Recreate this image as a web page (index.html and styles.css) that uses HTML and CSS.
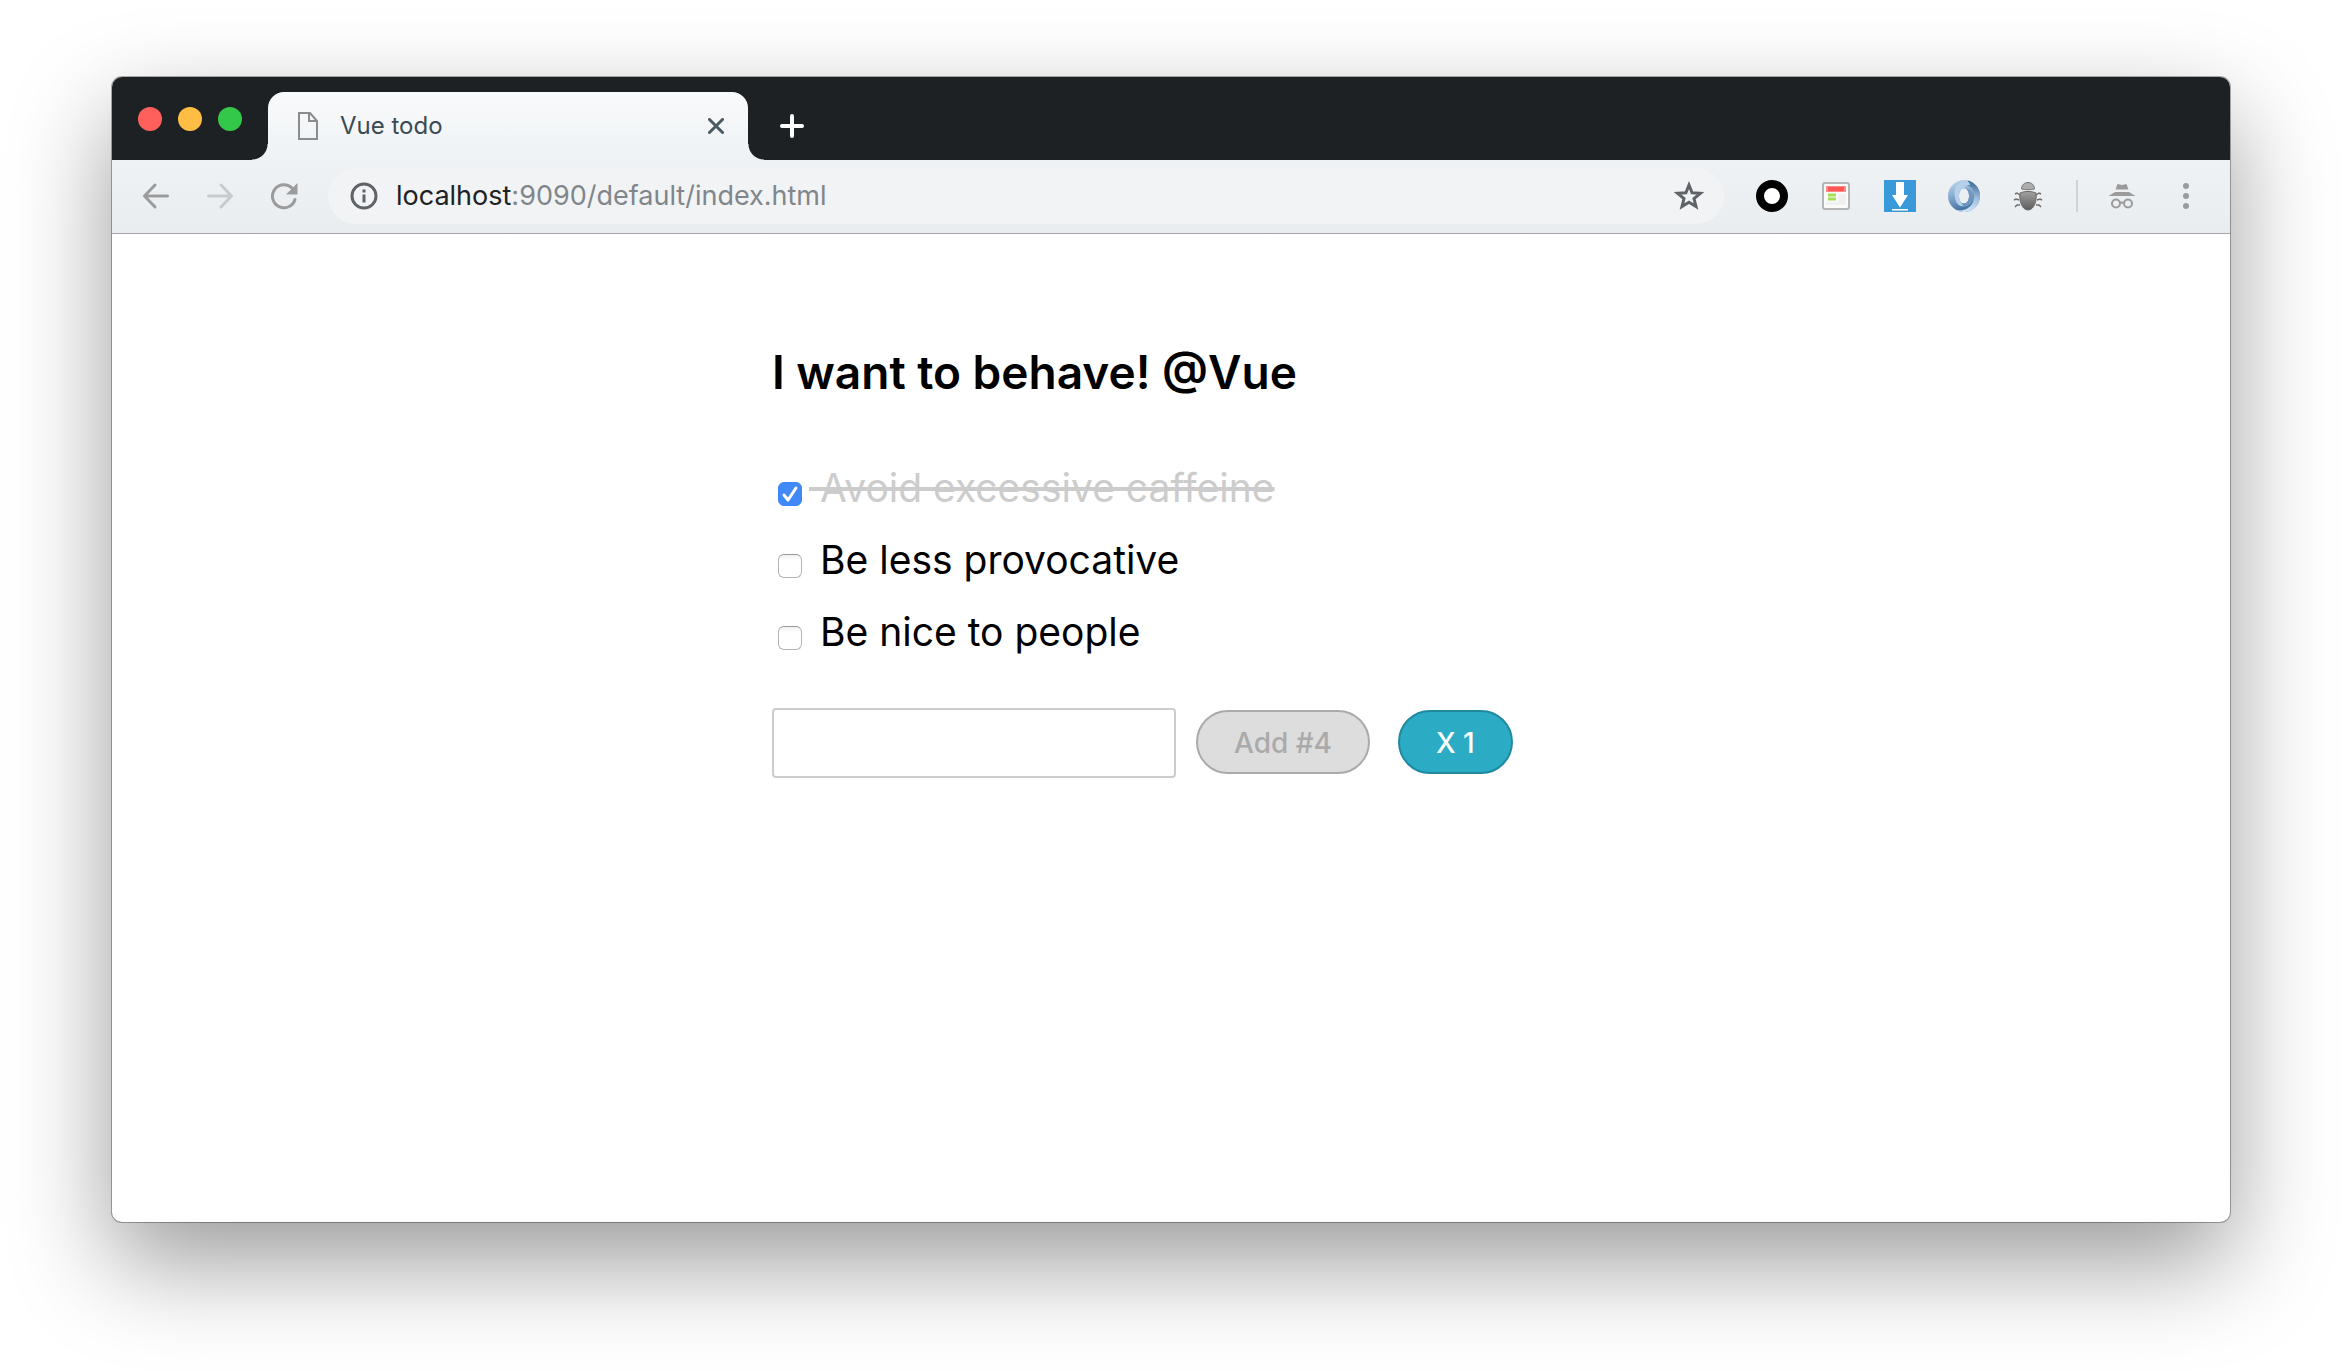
FILE: index.html
```html
<!DOCTYPE html>
<html lang="en">
<head>
<meta charset="utf-8">
<title>Vue todo</title>
<link rel="stylesheet" href="styles.css">
</head>
<body>
<div class="window">
  <header class="chrome">
    <div class="tabstrip">
      <div class="lights">
        <button class="light red" aria-label="Close window"></button>
        <button class="light yellow" aria-label="Minimize window"></button>
        <button class="light green" aria-label="Zoom window"></button>
      </div>
      <div class="tab">
        <svg class="page-icon" width="20" height="28" viewBox="0 0 20 28" fill="none" stroke="#8c8c8c" stroke-width="2"><path d="M1 1h11l7 8v18H1z"/><path d="M11 1v8h8"/></svg>
        <span class="tab-title">Vue todo</span>
        <button class="icon-button" aria-label="Close tab"><svg width="16" height="16" viewBox="0 0 16 16" stroke="#4b5b63" stroke-width="3" stroke-linecap="round"><path d="M1.500 1.500l13 13M14.500 1.500l-13 13"/></svg></button>
      </div>
      <button class="icon-button new-tab" aria-label="New tab"><svg width="24" height="24" viewBox="0 0 24 24" stroke="#fff" stroke-width="4" stroke-linecap="round"><path d="M12 2v20M2 12h20"/></svg></button>
    </div>
    <div class="toolbar">
      <nav class="nav">
        <button class="icon-button" aria-label="Back"><svg width="32" height="32" viewBox="0 0 32 32" fill="none" stroke="#9b9b9b" stroke-width="3" stroke-linecap="round" stroke-linejoin="round"><path d="M27.500 16H4.500M15 5L4.500 16 15 27"/></svg></button>
        <button class="icon-button" aria-label="Forward"><svg width="32" height="32" viewBox="0 0 32 32" fill="none" stroke="#c8cbcc" stroke-width="3" stroke-linecap="round" stroke-linejoin="round"><path d="M4.500 16h23M17 5l10.500 11L17 27"/></svg></button>
        <button class="icon-button" aria-label="Reload"><svg width="32" height="32" viewBox="0 0 32 32" fill="none"><path d="M27 19.500A11.500 11.500 0 1 1 24 8" stroke="#9b9b9b" stroke-width="3" stroke-linecap="round"/><path d="M29.500 3v11.500H18z" fill="#9b9b9b"/></svg></button>
      </nav>
      <div class="omnibox">
        <svg width="28" height="28" viewBox="0 0 28 28" fill="none" stroke="#5f6368" stroke-width="3"><circle cx="14" cy="14" r="12"/><path d="M14 12.500v8M14 7.500v3"/></svg>
        <span class="url">localhost<span class="path">:9090/default/index.html</span></span>
        <button class="icon-button" aria-label="Bookmark this page"><svg width="30" height="30" viewBox="0 0 30 30" fill="none" stroke="#5f6368" stroke-width="3"><path d="M15 4l3.100 7.700 8.200.6-6.300 5.300 2 8-7-4.400-7 4.400 2-8-6.300-5.300 8.200-.6z"/></svg></button>
      </div>
      <div class="extensions">
        <button class="icon-button" aria-label="Ring extension"><svg width="32" height="32" viewBox="0 0 32 32"><circle cx="16" cy="16" r="12" fill="#fff" stroke="#000" stroke-width="8"/></svg></button>
        <button class="icon-button" aria-label="Page extension"><svg width="32" height="32" viewBox="0 0 32 32"><rect x="3" y="3" width="26" height="26" rx="2" fill="#fafafa" stroke="#b5b5b5" stroke-width="2"/><path d="M18 14h8v11H6v-3h12z" fill="#f0f0f0"/><rect x="6" y="6" width="20" height="6" fill="#ff8a8a"/><rect x="8" y="7" width="16" height="4" fill="#ff5555"/><path d="M8 15h8M8 19h8" stroke="#a5df55" stroke-width="3"/></svg></button>
        <button class="icon-button" aria-label="Download extension"><svg width="32" height="32" viewBox="0 0 32 32"><path d="M0 0h32v32H0z" fill="#3a99d9"/><path d="M12 2h8v13h4l-8 12.500L8 15h4zM8 29h16v1.500H8z" fill="#fff"/></svg></button>
        <button class="icon-button" aria-label="Swirl extension"><svg width="32" height="32" viewBox="0 0 32 32"><defs><linearGradient id="swirl-a" x1="0" y1="0" x2=".3" y2="1"><stop offset="0" stop-color="#c4dcf0"/><stop offset=".5" stop-color="#86abd0"/><stop offset="1" stop-color="#3f6f9f"/></linearGradient><linearGradient id="swirl-b" x1=".3" y1="1" x2=".5" y2="0"><stop offset="0" stop-color="#d6e8f7"/><stop offset=".5" stop-color="#a3c2de"/><stop offset="1" stop-color="#3f6d99"/></linearGradient></defs><path fill-rule="evenodd" d="M16 0a16 16 0 1 0 0 32a16 16 0 1 0 0-32zM16 8.500c3 0 5 3.500 5 7.500s-2 7.500-5 7.500-5-3.500-5-7.500 2-7.500 5-7.500z" fill="url(#swirl-a)"/><path d="M20 .5C28 3 32 9 32 16c0 9-7 16-16 16-3 0-6-1-8-2 9 2 17-3 18-12C27 10 23 5 16 5c3-3 4-4 4-4.500z" fill="url(#swirl-b)"/><path d="M18 0C8 2 5 10 7 18c1 6 5 9 9 8-2-2-5-6-5-10 0-5 2-8 5-7.500 1-2 3-3.500 6-3.500 0-2-2-4-4-5z" fill="#b5d0e8"/><path d="M16 23.500c3 0 5-3 5-7.500 0-3-1-6-3-7.500 5 1 8 5 7 10-1 6-6 9-12 8 2-1 3-2 3-3z" fill="#6f97bf"/></svg></button>
        <button class="icon-button" aria-label="Bug extension"><svg width="32" height="32" viewBox="0 0 32 32"><defs><linearGradient id="bug" x1="0" y1="0" x2="0" y2="1"><stop offset="0" stop-color="#a2a2a2"/><stop offset="1" stop-color="#5c5c5c"/></linearGradient></defs><g fill="none" stroke="#6d6d6d" stroke-width="1.500"><path d="M8 15l-3-2-2 1M7 20l-3-1-2 1M8 25l-3 0-2 2M24 15l3-2 2 1M25 20l3-1 2 1M24 25l3 0 2 2"/></g><path d="M9.500 9c0-4 3-6.500 6.500-6.500s6.500 2.500 6.500 6.500c-4 1-9 1-13 0z" fill="#adadad" stroke="#767676"/><path d="M8 13c4-2 12-2 16 0 1 8-2 17-8 17S7 21 8 13z" fill="url(#bug)" stroke="#666"/></svg></button>
        <span class="divider"></span>
        <svg width="32" height="32" viewBox="0 0 32 32" fill="#9b9b9b"><path d="M11.500 4l4.500 1 4.500-1 2 5.500h-13zM9 12h14l6.500 4h-27z"/><g fill="none" stroke="#9b9b9b" stroke-width="2"><circle cx="10" cy="23.500" r="4"/><circle cx="22" cy="23.500" r="4"/><path d="M14 23q2-1 4 0"/></g></svg>
        <button class="icon-button" aria-label="Menu"><svg width="32" height="32" viewBox="0 0 32 32" fill="#9b9b9b"><circle cx="16" cy="6" r="3"/><circle cx="16" cy="16" r="3"/><circle cx="16" cy="26" r="3"/></svg></button>
      </div>
    </div>
  </header>
  <main class="todo">
    <h1>I want to behave! @Vue</h1>
    <ul class="items">
      <li><label class="done"><input type="checkbox" checked><span>&nbsp;Avoid excessive caffeine</span></label></li>
      <li><label><input type="checkbox"><span>&nbsp;Be less provocative</span></label></li>
      <li><label><input type="checkbox"><span>&nbsp;Be nice to people</span></label></li>
    </ul>
    <form class="entry">
      <input class="new-item" type="text" aria-label="New item">
      <button class="pill" type="submit" disabled>Add #4</button>
      <button class="pill clear" type="button">X 1</button>
    </form>
  </main>
</div>
</body>
</html>
```
FILE: styles.css
```css
* { box-sizing: border-box; }

body {
  margin: 0;
  min-height: 100vh;
  padding: 77px 112px 148px;
  display: flex;
  background: #fff;
  font-family: Inter, "Liberation Sans", sans-serif;
}

.window {
  flex: 1;
  min-width: 0;
  overflow: hidden;
  border-radius: 10px;
  background: #fff;
  box-shadow: 0 0 0 1px rgba(0, 0, 0, .3), 0 40px 100px rgba(0, 0, 0, .4);
}

button { padding: 0; font-family: inherit; }

.icon-button { display: flex; border: 0; background: none; }

svg { display: block; flex: none; }

/* browser chrome */
.chrome { border-bottom: 1px solid #a3a5a8; }

.tabstrip {
  display: flex;
  height: 83px;
  padding-left: 26px;
  background: #1e2124;
}

.lights { display: flex; gap: 16px; width: 130px; padding-top: 30px; }

.light { width: 24px; height: 24px; border: 0; border-radius: 50%; }
.red { background: #ff605c; }
.yellow { background: #ffbd44; }
.green { background: #34c84a; }

.tab {
  position: relative;
  display: flex;
  align-items: center;
  width: 480px;
  margin-top: 15px;
  padding: 0 24px 0 30px;
  gap: 22px;
  border-radius: 16px 16px 0 0;
  background: linear-gradient(#f9fafb, #eef2f5);
}

/* concave feet on either side of the tab */
.tab::before,
.tab::after {
  content: "";
  position: absolute;
  bottom: 0;
  width: 16px;
  height: 16px;
}
.tab::before { right: 100%; background: radial-gradient(circle at 0 0, transparent 15px, #eef2f5 16px); }
.tab::after { left: 100%; background: radial-gradient(circle at 100% 0, transparent 15px, #eef2f5 16px); }

.tab-title { flex: 1; font-size: 24px; line-height: 32px; color: #3b4a52; }

.new-tab { align-items: center; margin-left: 32px; padding-top: 15px; }

.toolbar {
  display: flex;
  align-items: center;
  height: 73px;
  padding: 0 28px 2px;
  background: linear-gradient(#eef2f5, #e9edf0);
}

.nav { display: flex; gap: 32px; width: 188px; }

.omnibox {
  flex: 1;
  display: flex;
  align-items: center;
  height: 56px;
  padding: 0 20px 0 22px;
  gap: 18px;
  border-radius: 28px;
  background: #f1f3f4;
}

.url { flex: 1; font-size: 27px; line-height: 36px; color: #202124; }
.path { color: #80868b; }

.extensions { display: flex; align-items: center; gap: 32px; margin-left: 32px; }

.divider { width: 2px; height: 32px; margin-right: -4px; background: #d0d3d5; }

/* page */
.todo { max-width: 798px; margin: 0 auto; padding: 106px 0 80px; }

h1 { margin: 0; font-size: 46px; line-height: 64px; font-weight: 600; color: #000; }

.items { margin: 48px 0 0; padding: 0; list-style: none; }
.items label { display: flex; align-items: center; height: 72px; font-size: 39px; line-height: 72px; color: #000; }

.items input {
  appearance: none;
  width: 24px;
  height: 24px;
  margin: 12px 7px 0 6px;
  border: 1px solid #b4b4b4;
  border-top-color: #989898;
  border-radius: 6px;
  background: linear-gradient(#f2f2f2, #fff 6px);
}

.items input:checked {
  border-color: #3b86f7;
  background: #4289f8 url("data:image/svg+xml,%3Csvg xmlns='http://www.w3.org/2000/svg' viewBox='0 0 22 22' fill='none' stroke='white' stroke-width='3' stroke-linecap='round' stroke-linejoin='round'%3E%3Cpath d='M5 12l4 5 8-12'/%3E%3C/svg%3E");
}

.done span { color: #ccc; text-decoration: line-through; text-decoration-thickness: 4px; }

.entry { display: flex; align-items: flex-start; margin-top: 40px; }

.new-item {
  width: 404px;
  height: 70px;
  padding: 0 16px;
  border: 2px solid #ccc;
  border-radius: 4px;
  font: 40px Inter, sans-serif;
}

.pill {
  height: 64px;
  margin: 2px 0 0 20px;
  padding: 2px 36px 0;
  border: 2px solid #aaa;
  border-radius: 32px;
  background: #ddd;
  color: #aaa;
  font-size: 28px;
  font-weight: 500;
}

.clear { margin-left: 28px; border-color: #2089a0; background: #2bacc4; color: #fff; }
```
